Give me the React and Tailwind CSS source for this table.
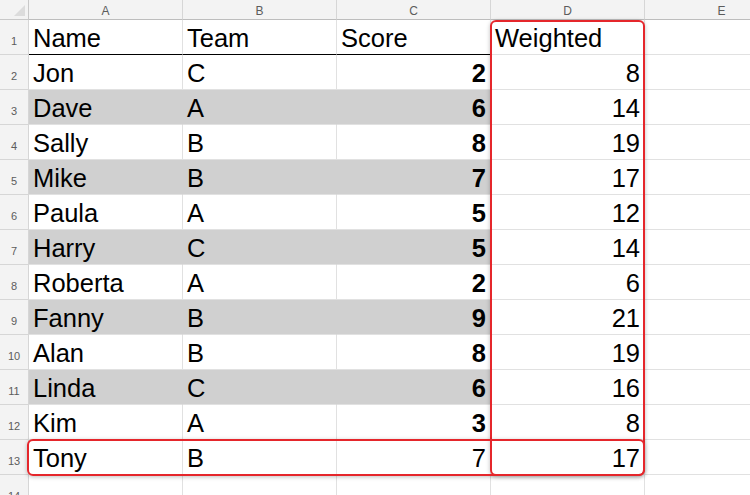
import React from 'react';

const ROWS = [
  ['Jon', 'C', 2, 8],
  ['Dave', 'A', 6, 14],
  ['Sally', 'B', 8, 19],
  ['Mike', 'B', 7, 17],
  ['Paula', 'A', 5, 12],
  ['Harry', 'C', 5, 14],
  ['Roberta', 'A', 2, 6],
  ['Fanny', 'B', 9, 21],
  ['Alan', 'B', 8, 19],
  ['Linda', 'C', 6, 16],
  ['Kim', 'A', 3, 8],
  ['Tony', 'B', 7, 17],
];

const COLS = ['A', 'B', 'C', 'D', 'E'];

function RowHead({ n }) {
  return (
    <div className="flex h-[35px] items-end justify-center border-b border-r border-[#d6d6d6] bg-[#f3f3f3] pb-[7px] text-[11px] leading-none text-[#5c5c5c]">
      {n}
    </div>
  );
}

function Cell({ children, right, bold, shaded, header }) {
  return (
    <div
      className={`h-[35px] overflow-visible whitespace-nowrap border-r text-[25.5px] leading-[36px] text-black ${
        right ? 'pr-[4px] text-right' : 'pl-[4px]'
      } ${bold ? 'font-bold' : ''} ${
        shaded ? 'border-[#d0d0d0] bg-[#d0d0d0]' : 'border-[#e1e1e1] bg-white'
      } ${header ? 'border-b border-b-black' : 'border-b border-b-[#e1e1e1]'}`}
    >
      {children}
    </div>
  );
}

export default function App() {
  return (
    <div
      className="relative h-[495px] w-[750px] overflow-hidden bg-white"
      style={{ fontFamily: '"Liberation Sans", Arial, sans-serif' }}
    >
      <div className="grid grid-cols-[29px_154px_154px_154px_154px_154px]">
        {/* column headers */}
        <div className="relative h-[20px] border-b border-r border-[#c8c8c8] bg-[#f3f3f3]">
          <svg className="absolute bottom-[3px] right-[3px]" width="11" height="11" viewBox="0 0 11 11">
            <polygon points="11,0 11,11 0,11" fill="#dcdcdc" />
          </svg>
        </div>
        {COLS.map((c) => (
          <div
            key={c}
            className="flex h-[20px] items-center justify-center border-b border-r border-b-[#bdbdbd] border-r-[#d6d6d6] bg-[#f3f3f3] pt-[2px] text-[12px] text-[#5c5c5c]"
          >
            {c}
          </div>
        ))}

        {/* row 1 */}
        <RowHead n={1} />
        <Cell header>Name</Cell>
        <Cell header>Team</Cell>
        <Cell header>Score</Cell>
        <Cell>Weighted</Cell>
        <Cell />

        {ROWS.map((r, i) => {
          const shaded = i % 2 === 1 && i < 11;
          const last = i === ROWS.length - 1;
          return (
            <React.Fragment key={r[0]}>
              <RowHead n={i + 2} />
              <Cell shaded={shaded}>{r[0]}</Cell>
              <Cell shaded={shaded}>{r[1]}</Cell>
              <Cell shaded={shaded} right bold={!last}>
                {r[2]}
              </Cell>
              <Cell right>{r[3]}</Cell>
              <Cell />
            </React.Fragment>
          );
        })}

        <RowHead n={14} />
        <Cell />
        <Cell />
        <Cell />
        <Cell />
        <Cell />
      </div>

      {/* highlight outlines */}
      <div className="pointer-events-none absolute left-[490px] top-[20px] h-[456px] w-[155px] rounded-[6px] border-2 border-[#e5262b] shadow-[0_1px_4px_rgba(0,0,0,0.25)]" />
      <div className="pointer-events-none absolute left-[27px] top-[439px] h-[37px] w-[618px] rounded-[6px] border-2 border-[#e5262b] shadow-[0_1px_4px_rgba(0,0,0,0.25)]" />
    </div>
  );
}
